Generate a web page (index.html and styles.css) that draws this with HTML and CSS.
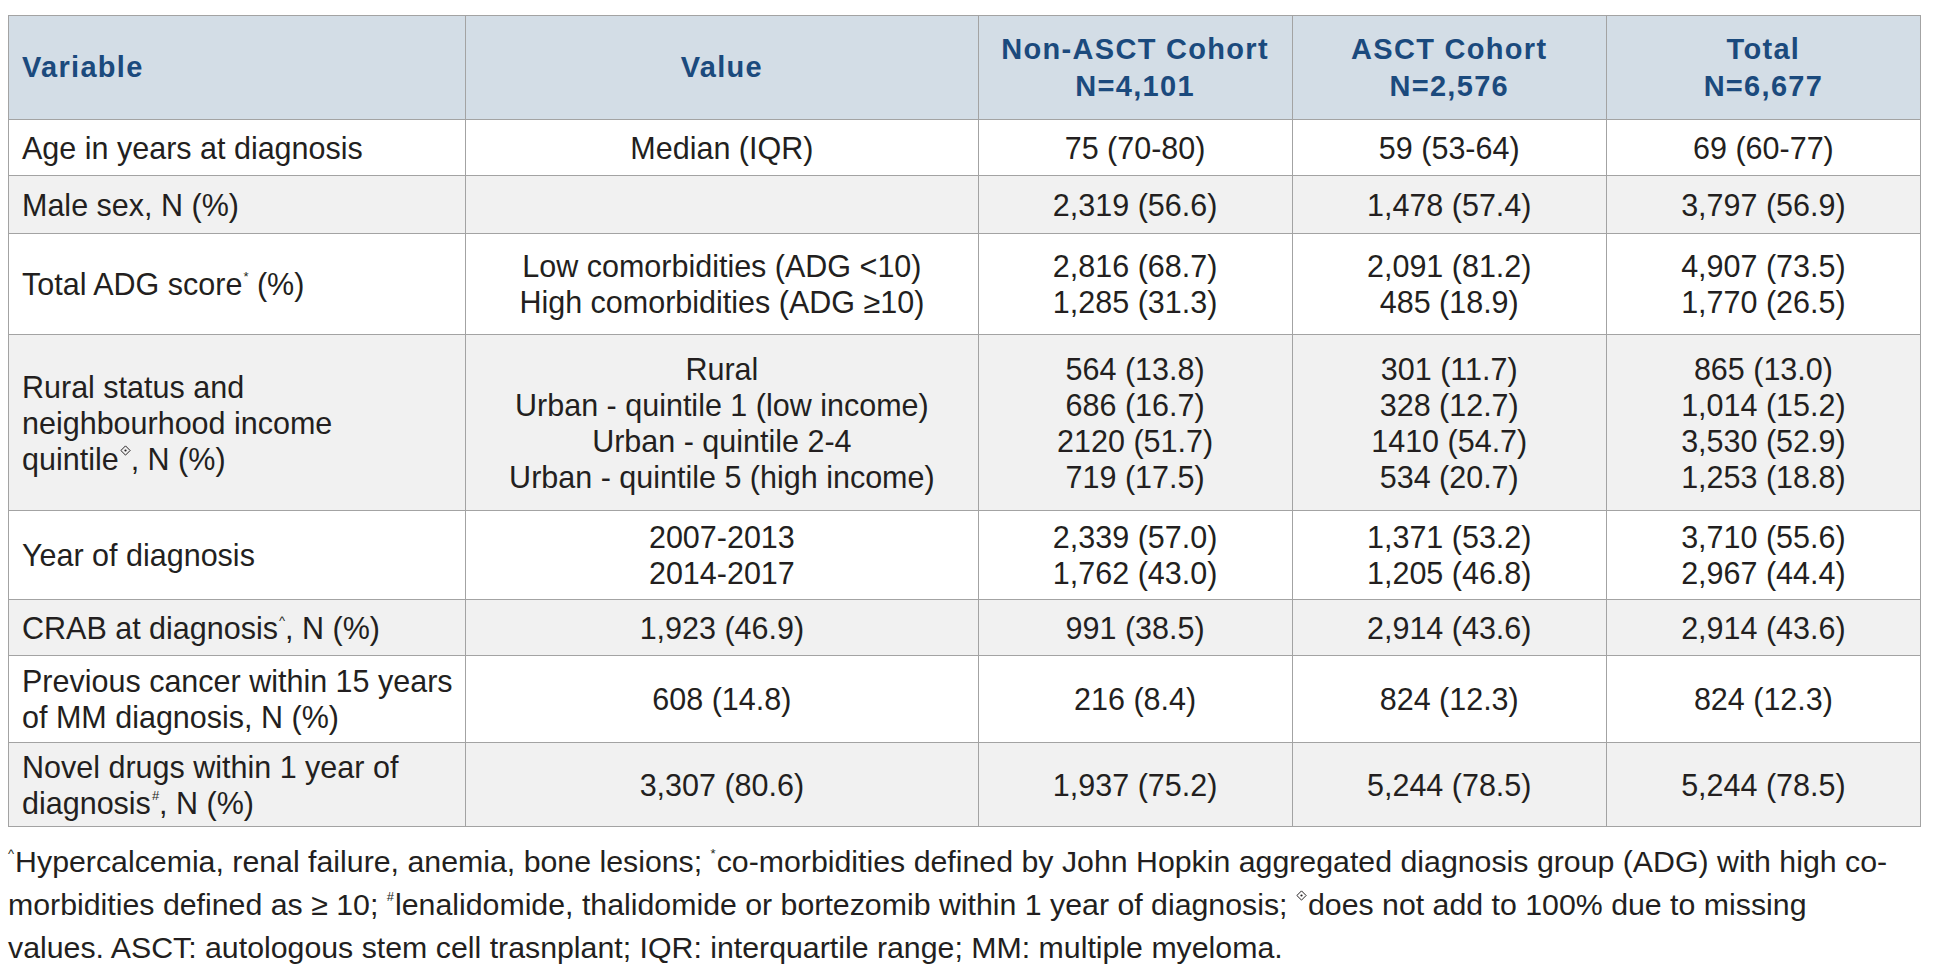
FILE: index.html
```html
<!DOCTYPE html>
<html lang="en">
<head>
<meta charset="utf-8">
<title>Cohort characteristics</title>
<link rel="stylesheet" href="styles.css">
</head>
<body>
<table class="data">
  <colgroup>
    <col class="c-var"><col class="c-val"><col class="c-num"><col class="c-num"><col class="c-num">
  </colgroup>
  <thead>
    <tr class="h-head">
      <th class="left">Variable</th>
      <th>Value</th>
      <th>Non-ASCT Cohort<br>N=4,101</th>
      <th>ASCT Cohort<br>N=2,576</th>
      <th>Total<br>N=6,677</th>
    </tr>
  </thead>
  <tbody>
    <tr class="h56 white">
      <td class="left">Age in years at diagnosis</td>
      <td>Median (IQR)</td>
      <td>75 (70-80)</td>
      <td>59 (53-64)</td>
      <td>69 (60-77)</td>
    </tr>
    <tr class="h58 grey">
      <td class="left">Male sex, N (%)</td>
      <td></td>
      <td>2,319 (56.6)</td>
      <td>1,478 (57.4)</td>
      <td>3,797 (56.9)</td>
    </tr>
    <tr class="h101 white">
      <td class="left">Total ADG score<sup>*</sup> (%)</td>
      <td>Low comorbidities (ADG &lt;10)<br>High comorbidities (ADG ≥10)</td>
      <td>2,816 (68.7)<br>1,285 (31.3)</td>
      <td>2,091 (81.2)<br>485 (18.9)</td>
      <td>4,907 (73.5)<br>1,770 (26.5)</td>
    </tr>
    <tr class="h176 grey">
      <td class="left">Rural status and<br>neighbourhood income<br>quintile<sup class="dia"><svg viewBox="0 0 10 10" width="11" height="11"><path d="M5 0.8 L9.2 5 L5 9.2 L0.8 5 Z" fill="none" stroke="#231f20" stroke-width="0.9"/><circle cx="5" cy="5" r="1" fill="#231f20"/></svg></sup>, N (%)</td>
      <td>Rural<br>Urban - quintile 1 (low income)<br>Urban - quintile 2-4<br>Urban - quintile 5 (high income)</td>
      <td>564 (13.8)<br>686 (16.7)<br>2120 (51.7)<br>719 (17.5)</td>
      <td>301 (11.7)<br>328 (12.7)<br>1410 (54.7)<br>534 (20.7)</td>
      <td>865 (13.0)<br>1,014 (15.2)<br>3,530 (52.9)<br>1,253 (18.8)</td>
    </tr>
    <tr class="h89 white">
      <td class="left">Year of diagnosis</td>
      <td>2007-2013<br>2014-2017</td>
      <td>2,339 (57.0)<br>1,762 (43.0)</td>
      <td>1,371 (53.2)<br>1,205 (46.8)</td>
      <td>3,710 (55.6)<br>2,967 (44.4)</td>
    </tr>
    <tr class="h56 grey">
      <td class="left">CRAB at diagnosis<sup>^</sup>, N (%)</td>
      <td>1,923 (46.9)</td>
      <td>991 (38.5)</td>
      <td>2,914 (43.6)</td>
      <td>2,914 (43.6)</td>
    </tr>
    <tr class="h87 white">
      <td class="left">Previous cancer within 15 years<br>of MM diagnosis, N (%)</td>
      <td>608 (14.8)</td>
      <td>216 (8.4)</td>
      <td>824 (12.3)</td>
      <td>824 (12.3)</td>
    </tr>
    <tr class="h84 grey">
      <td class="left">Novel drugs within 1 year of<br>diagnosis<sup>#</sup>, N (%)</td>
      <td>3,307 (80.6)</td>
      <td>1,937 (75.2)</td>
      <td>5,244 (78.5)</td>
      <td>5,244 (78.5)</td>
    </tr>
  </tbody>
</table>
<p class="note"><sup>^</sup>Hypercalcemia, renal failure, anemia, bone lesions; <sup>*</sup>co-morbidities defined by John Hopkin aggregated diagnosis group (ADG) with high co-<br>morbidities defined as ≥ 10; <sup>#</sup>lenalidomide, thalidomide or bortezomib within 1 year of diagnosis; <sup class="dia"><svg viewBox="0 0 10 10" width="11" height="11"><path d="M5 0.8 L9.2 5 L5 9.2 L0.8 5 Z" fill="none" stroke="#231f20" stroke-width="0.9"/><circle cx="5" cy="5" r="1" fill="#231f20"/></svg></sup>does not add to 100% due to missing<br>values. ASCT: autologous stem cell trasnplant; IQR: interquartile range; MM: multiple myeloma.</p>
</body>
</html>
```

FILE: styles.css
```css
html, body {
  margin: 0;
  padding: 0;
  background: #ffffff;
}

body {
  padding: 15px 15px 0 8px;
  font-family: "Liberation Sans", Arial, Helvetica, sans-serif;
  color: #231f20;
}

.data {
  width: 1913px;
  border-collapse: collapse;
  table-layout: fixed;
  font-size: 30.5px;
  line-height: 36px;
  border: 1.5px solid #a3a3a3;
}

.c-var { width: 457px; }
.c-val { width: 512px; }
.c-num { width: 314px; }

.data th,
.data td {
  border: 1.5px solid #a3a3a3;
  text-align: center;
  vertical-align: middle;
  padding: 0 12px;
  font-weight: normal;
}

.data th {
  background: #d3dde6;
  color: #1b4a7d;
  font-weight: bold;
  font-size: 29px;
  line-height: 37px;
  letter-spacing: 1.3px;
}

.data .left {
  text-align: left;
  padding-left: 13px;
}

.h-head { height: 104px; }
.h56 { height: 56px; }
.h58 { height: 58px; }
.h84 { height: 84px; }
.h87 { height: 87px; }
.h89 { height: 89px; }
.h101 { height: 101px; }
.h176 { height: 176px; }

.white td { background: #ffffff; }
.grey td { background: #f1f1f1; }

sup {
  font-size: 13px;
  line-height: 0;
  vertical-align: 14px;
  margin-left: 1px;
}

sup.dia svg {
  display: inline-block;
  vertical-align: 0;
}

.note {
  margin: 13px 0 0 0;
  width: 1913px;
  font-size: 30.3px;
  line-height: 43px;
}

.note sup {
  margin-left: 0;
  margin-right: 1px;
}
```
